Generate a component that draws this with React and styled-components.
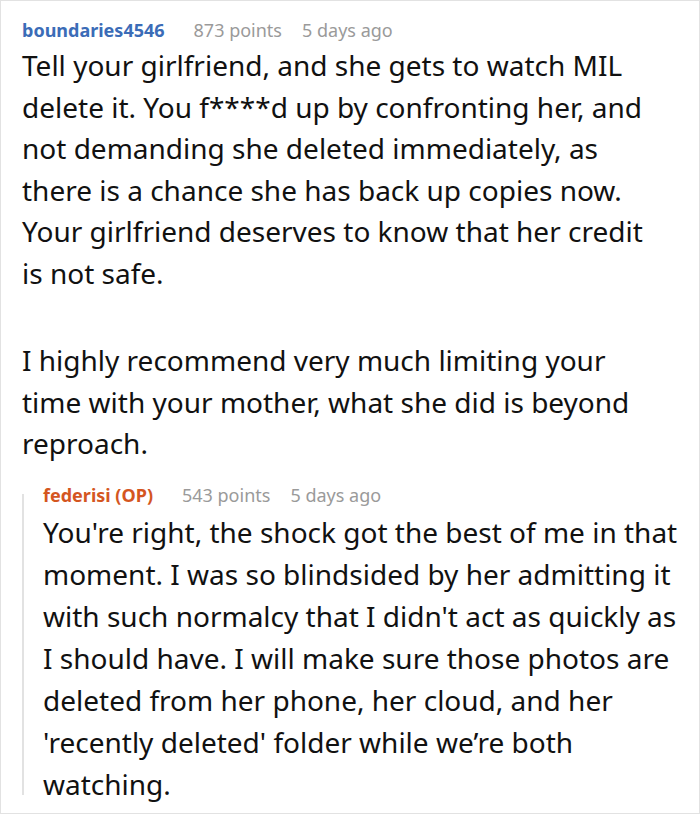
import React from "react";
import styled, { createGlobalStyle } from "styled-components";

const GlobalStyle = createGlobalStyle`
  html, body {
    margin: 0;
    padding: 0;
    background: #fff;
  }
  body {
    font-family: "Noto Sans", "Open Sans", sans-serif;
    color: #111;
  }
`;

const Frame = styled.div`
  box-sizing: border-box;
  width: 700px;
  height: 814px;
  border: 1px solid #e2e2e2;
  padding: 16px 18px 0 21px;
  overflow: hidden;
`;

const Comment = styled.div`
  display: flex;
  flex-direction: column;
  padding-right: 22px;
`;

const Reply = styled.div`
  position: relative;
  margin-top: 17px;
  padding-left: 21px;
  display: flex;
  flex-direction: column;

  &::before {
    content: "";
    position: absolute;
    left: 0;
    top: 12px;
    bottom: 10px;
    width: 2px;
    background: #e2e2e2;
  }
`;

const Meta = styled.div`
  display: flex;
  align-items: baseline;
  font-size: 18px;
  line-height: 26px;
`;

const Author = styled.span`
  font-weight: 700;
  margin-right: 29px;
  color: ${({ $op }) => ($op ? "#d4561f" : "#3b6cb7")};
`;

const Stat = styled.span`
  color: #9a9a9a;
  margin-right: 20px;
`;

const Body = styled.div`
  font-size: 28px;
  line-height: ${({ $reply }) => ($reply ? "42px" : "41.5px")};
  margin-top: ${({ $reply }) => ($reply ? "3px" : "2px")};
`;

const Para = styled.p`
  margin: 0 0 46px 0;
  &:last-child {
    margin-bottom: 0;
  }
`;

export default function App() {
  return (
    <>
      <GlobalStyle />
      <Frame>
        <Comment>
          <Meta>
            <Author>boundaries4546</Author>
            <Stat>873 points</Stat>
            <Stat>5 days ago</Stat>
          </Meta>
          <Body>
            <Para>
              Tell your girlfriend, and she gets to watch MIL delete it. You
              f****d up by confronting her, and not demanding she deleted
              immediately, as there is a chance she has back up copies now.
              Your girlfriend deserves to know that her credit is not safe.
            </Para>
            <Para>
              I highly recommend very much limiting your time with your
              mother, what she did is beyond reproach.
            </Para>
          </Body>
        </Comment>
        <Reply>
          <Meta>
            <Author $op>federisi (OP)</Author>
            <Stat>543 points</Stat>
            <Stat>5 days ago</Stat>
          </Meta>
          <Body $reply>
            <Para>
              You're right, the shock got the best of me in that moment. I
              was so blindsided by her admitting it with such normalcy that I
              didn't act as quickly as I should have. I will make sure those
              photos are deleted from her phone, her cloud, and her 'recently
              deleted' folder while we’re both watching.
            </Para>
          </Body>
        </Reply>
      </Frame>
    </>
  );
}
